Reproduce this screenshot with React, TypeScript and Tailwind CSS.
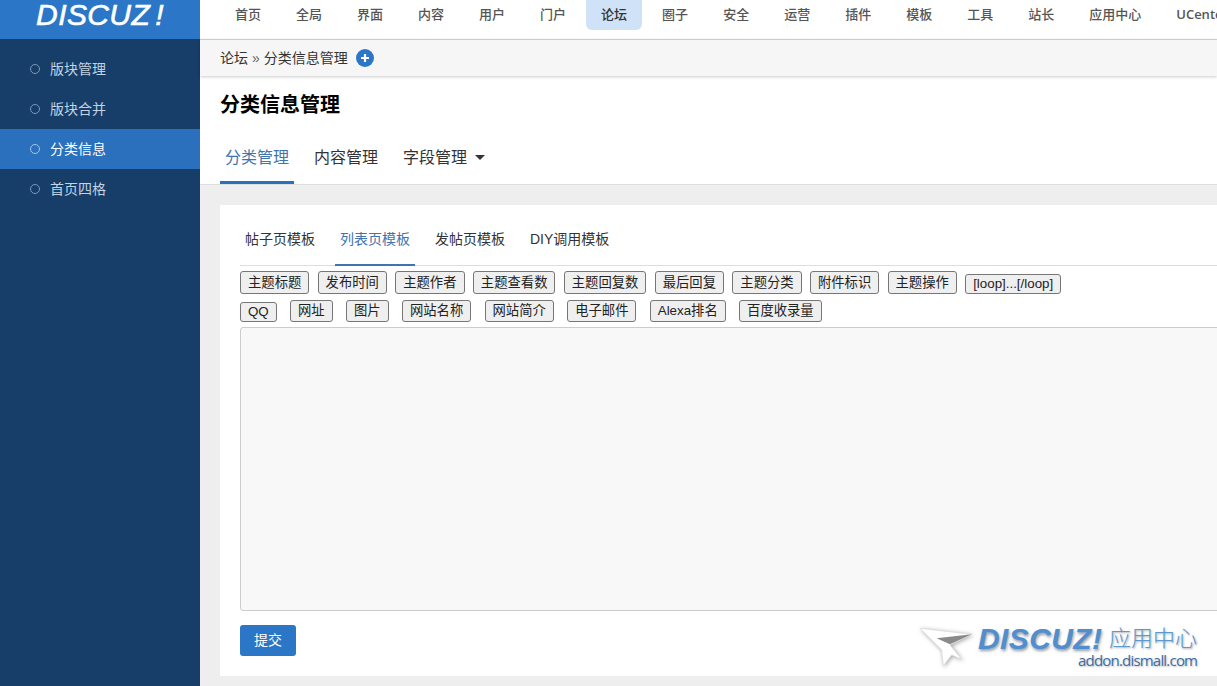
const NAV = ["首页", "全局", "界面", "内容", "用户", "门户", "论坛", "圈子", "安全", "运营", "插件", "模板", "工具", "站长", "应用中心", "UCenter"];
const SIDE = ["版块管理", "版块合并", "分类信息", "首页四格"];
const ROW1 = ["主题标题", "发布时间", "主题作者", "主题查看数", "主题回复数", "最后回复", "主题分类", "附件标识", "主题操作", "[loop]...[/loop]"];
const ROW2 = ["QQ", "网址", "图片", "网站名称", "网站简介", "电子邮件", "Alexa排名", "百度收录量"];
const FONT = "font-['Liberation_Sans','Noto_Sans_CJK_SC',sans-serif]";

function TagButton({ label }: { label: string }) {
  const latin = label === "QQ" || label.startsWith("[");
  return (
    <button
      type="button"
      className={`shrink-0 px-[7px] border border-[#767676] rounded-[3px] bg-[#efefef] text-[13.33px] leading-none text-[#222] whitespace-nowrap ${latin ? "h-[20px]" : "h-[22.5px]"}`}
    >
      {label}
    </button>
  );
}

function Watermark() {
  return (
    <div className="absolute left-[918px] top-[612px] w-[299px] h-[64px] bg-white">
      <svg className="absolute left-0 top-[12px] drop-shadow-[1px_1px_2px_rgba(0,0,0,0.35)]" width="60" height="50" viewBox="54 72 180 150">
        <path d="M60 85 L215 103 L150 135 L185 178 L155 165 L130 197 L125 150 Z" fill="#fff" stroke="#d8d8d8" strokeWidth="2" strokeLinejoin="round" />
        <path d="M110 115 L215 103 L150 133 Z" fill="#8a8a8a" />
      </svg>
      <span className="absolute left-[60px] top-[11px] font-['Liberation_Sans'] italic font-bold text-[30px] leading-[32px] tracking-[0.4px] text-[#4f8fd0] [text-shadow:1px_2px_3px_rgba(60,70,90,0.55)]">
        DISCUZ!
      </span>
      <span className="absolute left-[191px] top-[9px] font-['Noto_Sans_CJK_SC'] font-light text-[22px] leading-[30px] text-[#5f97cf] [text-shadow:1px_1px_2px_rgba(60,70,90,0.5)]">
        应用中心
      </span>
      <span className="absolute left-[160px] top-[39px] font-['Open_Sans'] text-[15px] leading-[18px] tracking-[-0.8px] text-[#3f6c9c] [text-shadow:1px_1px_2px_rgba(60,70,90,0.35)]">
        addon.dismall.com
      </span>
    </div>
  );
}

export default function App() {
  return (
    <div className={`relative flex w-[1217px] h-[686px] overflow-hidden bg-[#eeeeee] ${FONT}`}>
      <aside className="w-[200px] shrink-0 bg-[#163e69]">
        <div className="h-[39px] bg-[#2b76c6] flex justify-center items-start">
          <span className="font-['Liberation_Sans'] italic text-[30px] leading-[30px] tracking-[0.4px] text-white [-webkit-text-stroke:0.6px_white]">
            DISCUZ<span className="ml-[5px]">!</span>
          </span>
        </div>
        <nav className="pt-[10px]">
          {SIDE.map((item) => (
            <div
              key={item}
              className={`h-[40px] flex items-center pl-[30px] text-[14px] ${item === "分类信息" ? "bg-[#2b70bd] text-white" : "text-[#c3d3e3]"}`}
            >
              <span className={`w-[10px] h-[10px] rounded-full border mr-[10px] ${item === "分类信息" ? "border-[#a9c6e6]" : "border-[#7f9ab5]"}`} />
              {item}
            </div>
          ))}
        </nav>
      </aside>

      <main className="flex-1 min-w-0 flex flex-col">
        <header className="h-[39px] bg-white shrink-0 flex gap-[5px] pl-[20px] overflow-hidden">
          {NAV.map((item) => (
            <div
              key={item}
              className={`h-[30px] min-w-[56px] px-[15px] shrink-0 flex items-center justify-center rounded-b-[6px] text-[13px] font-medium whitespace-nowrap ${item === "论坛" ? "bg-[#cfe2f8] text-[#333]" : "text-[#555]"} ${item === "UCenter" ? "font-['Open_Sans'] font-semibold" : ""}`}
            >
              {item}
            </div>
          ))}
        </header>

        <div className="h-[37px] shrink-0 border-t border-[#cccccc] bg-[#f6f6f6] shadow-[0_1px_3px_rgba(0,0,0,0.2)] flex items-center pl-[20px] text-[14px] text-[#333] relative">
          <span>论坛</span>
          <span className="mx-[4px] text-[#666]">»</span>
          <span>分类信息管理</span>
          <svg className="ml-[8px]" width="18" height="18" viewBox="0 0 18 18">
            <circle cx="9" cy="9" r="9" fill="#2b76c6" />
            <path d="M9 5v8M5 9h8" stroke="#fff" strokeWidth="2.2" />
          </svg>
        </div>

        <div className="h-[109px] shrink-0 bg-white border-b border-[#dddddd] pl-[20px] flex flex-col">
          <h1 className="mt-[16px] text-[20px] leading-[26px] font-bold text-black">分类信息管理</h1>
          <div className="mt-[22px] flex text-[16px] text-[#333]">
            <div className="h-[44px] w-[74px] pt-[7px] text-center leading-[22px] text-[#3f74ad] border-b-[3px] border-[#2b70bd]">分类管理</div>
            <div className="h-[44px] ml-[10px] px-[10px] pt-[7px] leading-[22px]">内容管理</div>
            <div className="h-[44px] ml-[5px] px-[10px] pt-[7px] leading-[22px] flex items-start">
              字段管理
              <span className="ml-[8px] mt-[8px] border-x-[5px] border-x-transparent border-t-[5px] border-t-[#333]" />
            </div>
          </div>
        </div>

        <section className="ml-[20px] mt-[20px] w-[1100px] h-[471px] shrink-0 bg-white pt-[14px] pl-[20px] pr-[50px]">
          <div className="h-[47px] border-b border-[#dddddd] flex text-[14px] text-[#333]">
            <div className="w-[80px] pl-[5px] pt-[10px] leading-[20px]">帖子页模板</div>
            <div className="ml-[15px] w-[80px] text-center pt-[10px] leading-[20px] text-[#3f74ad] h-[47px] border-b-[2px] border-[#3f74ad]">列表页模板</div>
            <div className="ml-[20px] pt-[10px] leading-[20px]">发帖页模板</div>
            <div className="ml-[25px] pt-[10px] leading-[20px]">DIY调用模板</div>
          </div>
          <div className="mt-[5px] flex items-end gap-[8.3px]">
            {ROW1.map((label) => (
              <TagButton key={label} label={label} />
            ))}
          </div>
          <div className="mt-[6px] flex items-end gap-[13.3px]">
            {ROW2.map((label) => (
              <TagButton key={label} label={label} />
            ))}
          </div>
          <textarea
            className="block mt-[5px] w-full h-[284px] bg-[#f8f8f8] border border-[#cccccc] rounded-[3px] outline-none resize-none"
            readOnly
          />
          <button type="button" className="mt-[14px] w-[56px] h-[31px] rounded-[3px] bg-[#2b76c6] text-white text-[14px]">
            提交
          </button>
        </section>
      </main>

      <Watermark />
    </div>
  );
}
